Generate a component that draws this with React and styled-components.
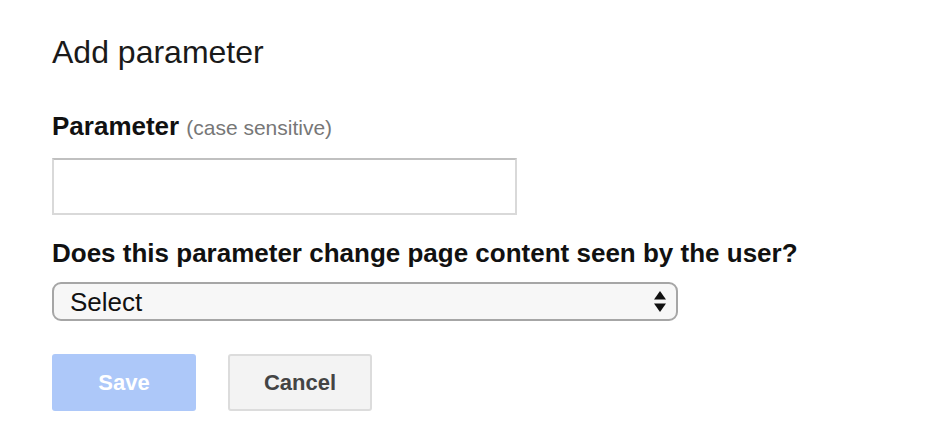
import React from 'react';
import styled, { createGlobalStyle } from 'styled-components';

const GlobalStyle = createGlobalStyle`
  html, body {
    margin: 0;
    padding: 0;
    background: #ffffff;
  }
  body {
    font-family: "Liberation Sans", Arial, sans-serif;
  }
`;

const Page = styled.div`
  width: 936px;
  height: 444px;
  box-sizing: border-box;
  padding: 34px 0 0 52px;
  font-family: "Liberation Sans", Arial, sans-serif;
  color: #222;
`;

const Title = styled.h1`
  margin: 0 0 41px;
  font-size: 32px;
  line-height: 36px;
  font-weight: normal;
  color: #1a1a1a;
`;

const Label = styled.div`
  font-size: 26px;
  line-height: 30px;
  font-weight: bold;
  color: #111;
  margin-bottom: ${p => p.gap}px;
`;

const Hint = styled.span`
  font-size: 21px;
  font-weight: normal;
  color: #777;
  margin-left: 7px;
`;

const TextInput = styled.input`
  display: block;
  box-sizing: border-box;
  width: 465px;
  height: 57px;
  margin: 0 0 23px;
  padding: 0 12px;
  border: 2px solid #d9d9d9;
  border-top-color: #c0c0c0;
  border-radius: 0;
  font-family: inherit;
  font-size: 24px;
  outline: none;
  background: #fff;
`;

const SelectBox = styled.div`
  position: relative;
  width: 626px;
  height: 39px;
  margin-bottom: 33px;
`;

const NativeSelect = styled.select`
  appearance: none;
  -webkit-appearance: none;
  box-sizing: border-box;
  width: 100%;
  height: 100%;
  padding: 0 40px 0 16px;
  border: 2px solid #a6a6a6;
  border-radius: 9px;
  background: #f7f7f7;
  font-family: inherit;
  font-size: 26px;
  color: #111;
  outline: none;
`;

const Arrows = styled.svg`
  position: absolute;
  right: 12px;
  top: 9px;
  pointer-events: none;
`;

const Actions = styled.div`
  display: flex;
  gap: 32px;
`;

const Button = styled.button`
  box-sizing: border-box;
  width: 144px;
  height: 57px;
  border-radius: 3px;
  font-family: inherit;
  font-size: 22px;
  font-weight: bold;
  cursor: pointer;
  border: ${p => (p.primary ? 'none' : '2px solid #dcdcdc')};
  background: ${p => (p.primary ? '#adc8f9' : '#f3f3f3')};
  color: ${p => (p.primary ? '#ffffff' : '#444444')};
`;

export default function App() {
  return (
    <>
      <GlobalStyle />
      <Page>
        <Title>Add parameter</Title>
        <Label gap={15}>
          Parameter<Hint>(case sensitive)</Hint>
        </Label>
        <TextInput type="text" />
        <Label gap={14}>Does this parameter change page content seen by the user?</Label>
        <SelectBox>
          <NativeSelect defaultValue="">
            <option value="">Select</option>
            <option value="yes">Yes: Changes, reorders, or narrows page content</option>
            <option value="no">No: Doesn't affect page content</option>
          </NativeSelect>
          <Arrows width="12" height="22" viewBox="0 0 12 22">
            <path d="M6 0 L12 8.5 L0 8.5 Z" fill="#111" />
            <path d="M0 12.5 L12 12.5 L6 21 Z" fill="#111" />
          </Arrows>
        </SelectBox>
        <Actions>
          <Button primary>Save</Button>
          <Button>Cancel</Button>
        </Actions>
      </Page>
    </>
  );
}
